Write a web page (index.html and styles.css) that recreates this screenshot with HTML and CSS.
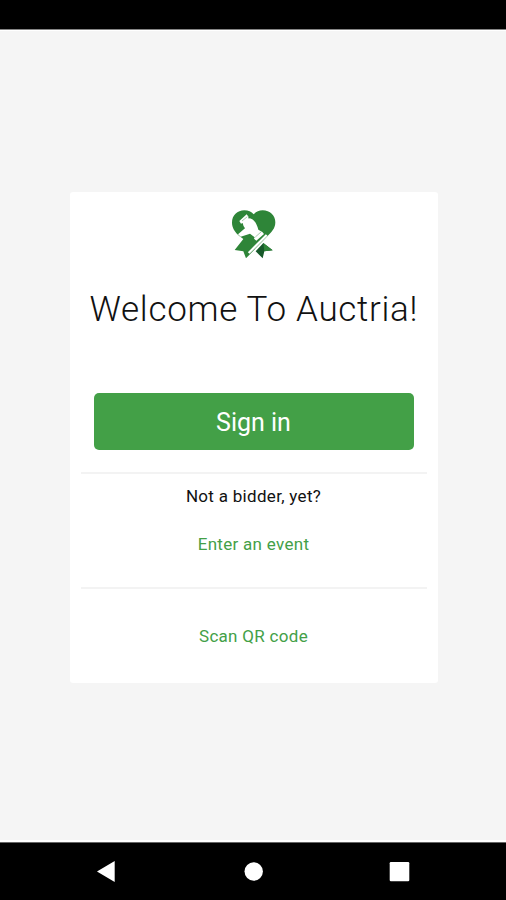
FILE: index.html
```html
<!DOCTYPE html>
<html lang="en">
<head>
<meta charset="utf-8">
<title>Auctria</title>
<link rel="stylesheet" href="styles.css">
</head>
<body>
<div class="status-bar"></div>
<main class="screen">
  <section class="card">
    <svg class="logo" viewBox="0 0 210 198" aria-hidden="true">
      <path class="leaf" d="M64 105 C50 92 42 80 42 65 C42 43 58 28 79 28 C91 28 100 32 107 40 C114 32 123 28 134 28 C156 28 172 43 172 64 C172 83 160 94 148 106 L84 172 L76 151 L50 147 L76 114 Z"/>
      <path class="fold" d="M113 151 L136 126 L164 148 L139 151 L134 172 Z"/>
      <path class="leaf" d="M136 126 L164 148 L139 151 Z"/>
      <path class="gavel" d="M64 60 L86 40 L92 48 L90 52 Q112 51 121 86 L133 93 L138 99 L115 119 L108 113 L110 109 L96 98 L68 107 L60 100 L81 82 Q75 74 74 66 L69 68 Z"/>
      <path class="cut" d="M92 156 L146 102"/>
      <path class="line" d="M72 60 L88 47 M112 108 L130 92"/>
    </svg>
    <h1 class="title">Welcome To Auctria!</h1>
    <button class="sign-in">Sign in</button>
    <div class="bidder">
      <p class="question">Not a bidder, yet?</p>
      <a class="link">Enter an event</a>
    </div>
    <div class="scan"><a class="link">Scan QR code</a></div>
  </section>
</main>
<nav class="nav-bar">
  <svg class="nav-icons" viewBox="0 0 506 57" aria-hidden="true">
    <path d="M97 28.5 L114.7 18 V39 Z"/>
    <circle cx="253.7" cy="28.5" r="9.2"/>
    <rect x="389.7" y="19" width="19.6" height="19.3" rx="1.2"/>
  </svg>
</nav>
</body>
</html>
```
FILE: styles.css
```css
* {
  box-sizing: border-box;
}

body {
  margin: 0;
  height: 900px;
  display: flex;
  flex-direction: column;
  background: #f5f5f5;
  font-family: Roboto, "Liberation Sans", sans-serif;
  color: #111;
}

.status-bar {
  height: 30px;
  flex: none;
  background: #000;
  border-bottom: 1px solid #858585;
}

.screen {
  flex: 1;
  padding: 160.5px 68.5px 0 69.5px;
  border-top: 1px solid #fff;
  border-bottom: 2px solid #fff;
}

.card {
  height: 491px;
  display: flex;
  flex-direction: column;
  padding: 9px 11px 0;
  background: #fff;
  border-radius: 3px;
}

.logo {
  width: 70px;
  height: 66px;
  flex: none;
  margin-left: 137.5px;
}

.leaf {
  fill: #2e8538;
}

.fold {
  fill: #17592a;
}

.gavel {
  fill: #fff;
}

.cut {
  fill: none;
  stroke: #fff;
  stroke-width: 7;
}

.line {
  fill: none;
  stroke: #79ae7e;
  stroke-width: 2;
}

.title {
  height: 40px;
  margin: 23px 0 0 9px;
  font-size: 35px;
  line-height: 40px;
  font-weight: 300;
  letter-spacing: 0.7px;
  white-space: nowrap;
}

.sign-in {
  width: 320px;
  height: 57px;
  flex: none;
  margin: 63.5px 0 0 13px;
  padding: 3px 0 0;
  border: 0;
  border-radius: 5px;
  background: #43a047;
  color: #fff;
  font: 400 25px/30px Roboto, "Liberation Sans", sans-serif;
}

.bidder,
.scan {
  display: flex;
  flex-direction: column;
  align-items: center;
  border-top: 2px solid #f3f3f3;
}

.bidder {
  height: 115px;
  margin-top: 22px;
}

.question,
.link {
  margin: 0;
  font-size: 17px;
  line-height: 20px;
  letter-spacing: 0.3px;
}

.question {
  margin-top: 12px;
}

.link {
  color: #43a047;
}

.bidder .link {
  margin-top: 28px;
}

.scan {
  padding-top: 37px;
}

.nav-bar {
  height: 58px;
  flex: none;
  background: #000;
  border-top: 1px solid #666;
}

.nav-icons {
  display: block;
  width: 506px;
  height: 57px;
  fill: #fff;
}
```
